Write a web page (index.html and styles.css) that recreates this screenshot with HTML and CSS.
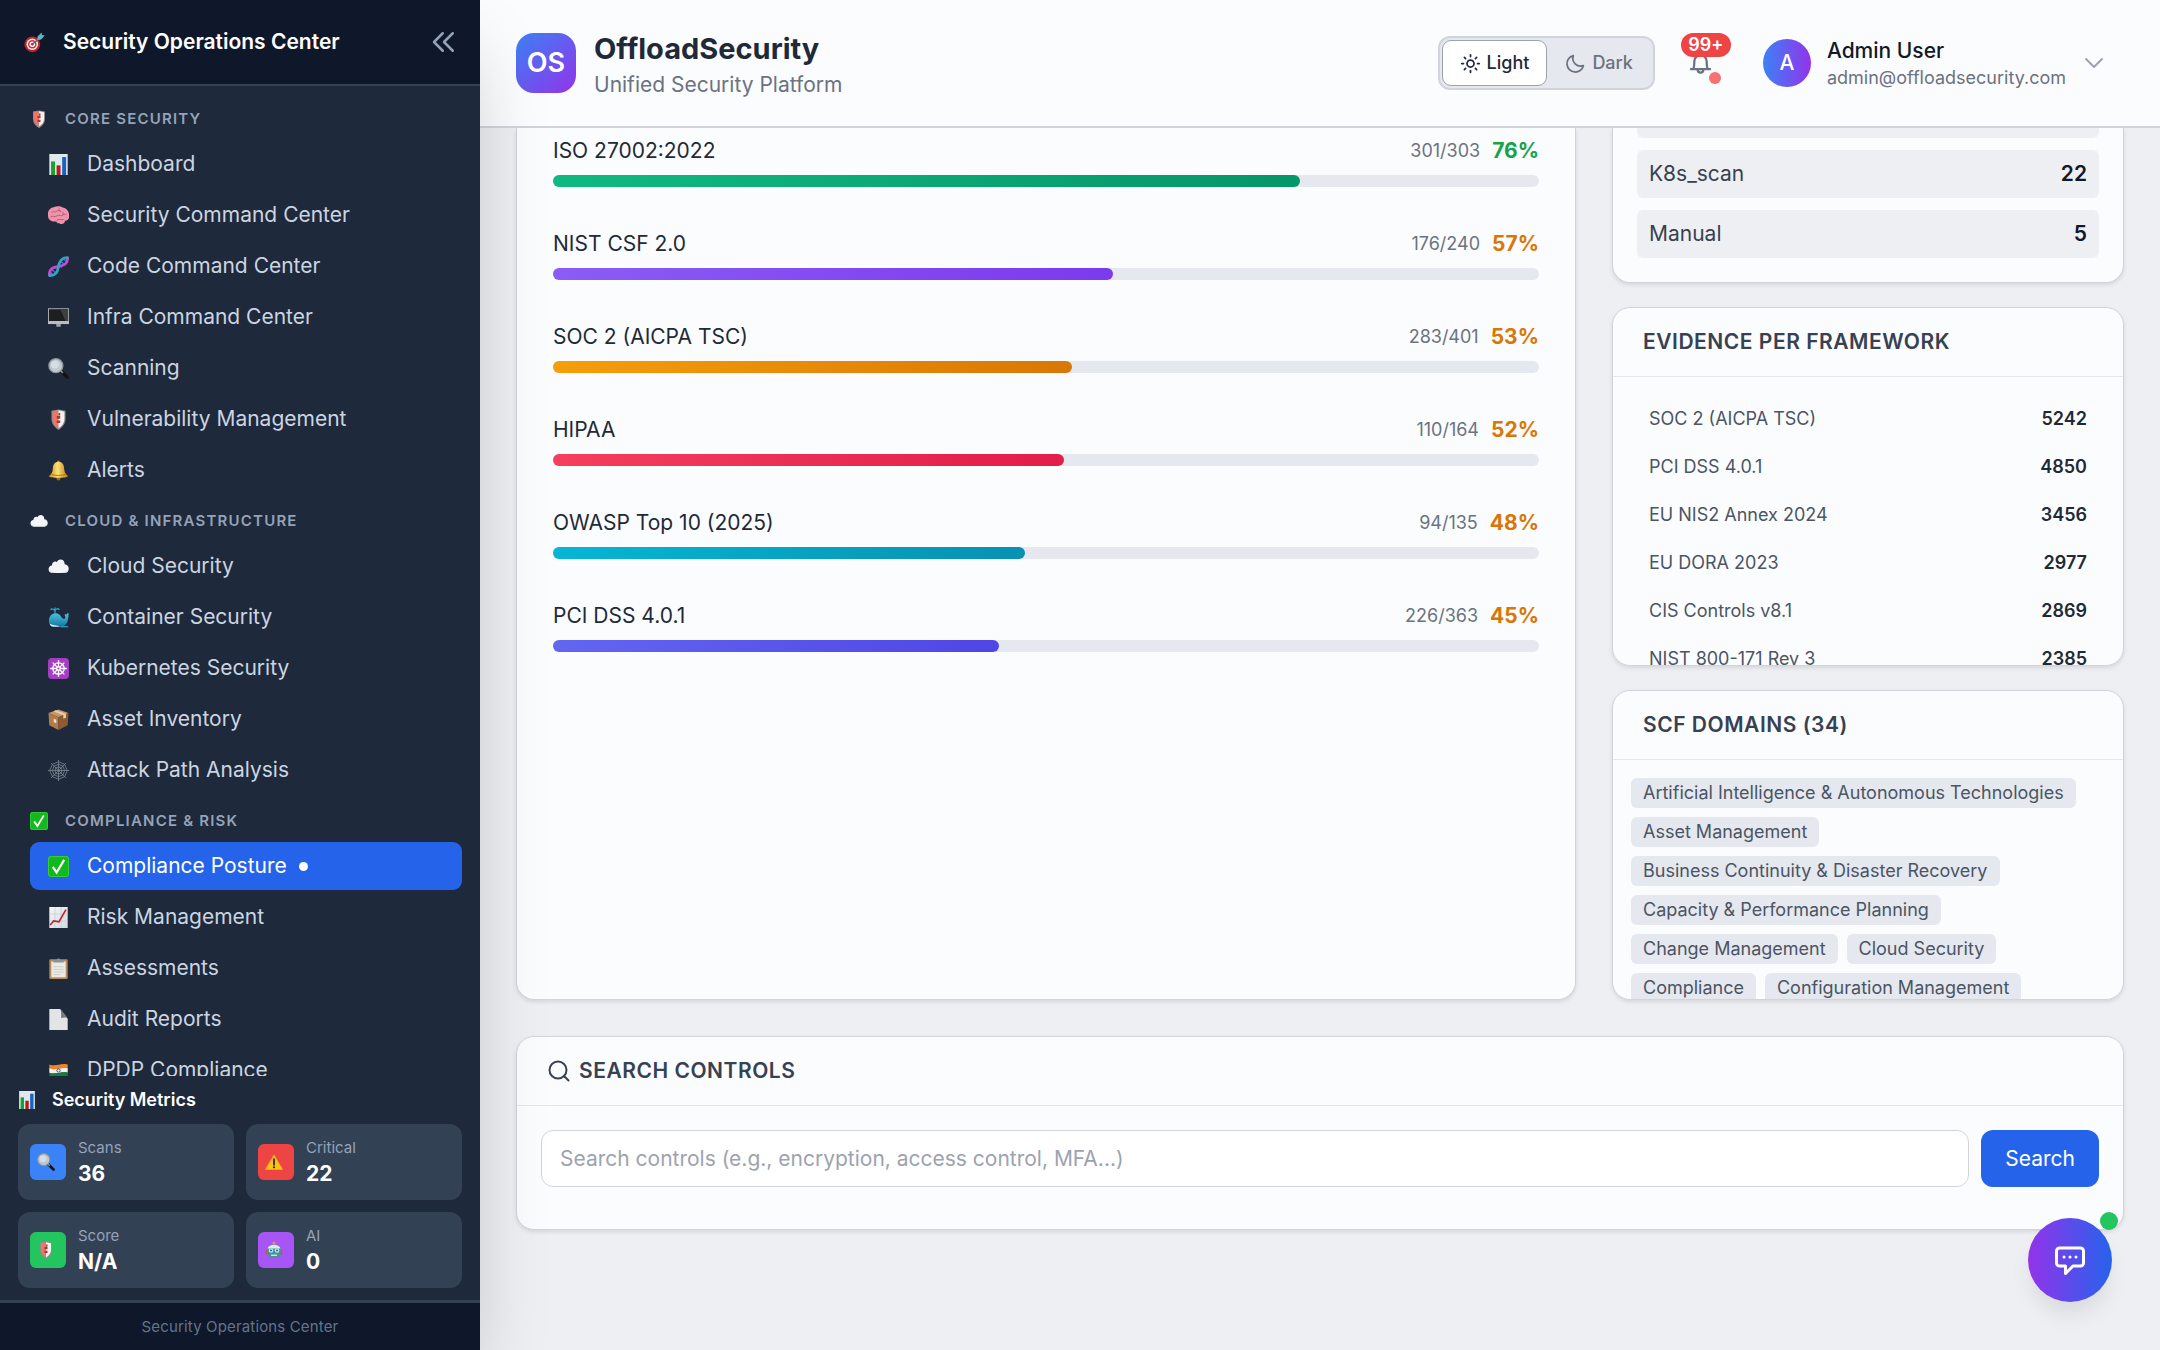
FILE: index.html
```
<!DOCTYPE html>
<html lang="en">
<head>
    <meta charset="UTF-8">
    <title>OffloadSecurity - Compliance Posture</title>
    <link rel="stylesheet" href="styles.css">
</head>
<body>
    <!-- icon sprite -->
    <svg class="sprite" aria-hidden="true">
        <defs>
            <linearGradient id="gold" x1="0" x2="1"><stop offset="0" stop-color="#c98a12"/><stop offset=".45" stop-color="#ffe074"/><stop offset="1" stop-color="#b9780c"/></linearGradient>
            <linearGradient id="whaleBlue" x1="0" y1="0" x2="0" y2="1"><stop offset="0" stop-color="#4cc3de"/><stop offset="1" stop-color="#1577a5"/></linearGradient>
            <linearGradient id="paper" x1="0" y1="0" x2="1" y2="1"><stop offset="0" stop-color="#f4f6f8"/><stop offset="1" stop-color="#d3d8de"/></linearGradient>
        </defs>
        <symbol id="i-target" viewBox="0 0 24 24">
            <circle cx="9.500" cy="14" r="9" fill="#c4222b"/><circle cx="9.500" cy="14" r="6.600" fill="#f5f5f5"/><circle cx="9.500" cy="14" r="4.900" fill="#d92b34"/><circle cx="9.500" cy="14" r="3.200" fill="#fff"/><circle cx="9.500" cy="14" r="1.600" fill="#d92b34"/>
            <path d="M9.500 14 18 7" stroke="#3a6f80" stroke-width="1.600"/><path d="m15 9.500.5-4.500 4.500-4.500.6 3 3.200.6-4.300 4.400z" fill="#58b7c6"/>
        </symbol>
        <symbol id="i-shield" viewBox="0 0 24 24">
            <path d="M4 2 12 .5 20 2v9.500c0 5.500-3.500 9.500-8 12.500-4.500-3-8-7-8-12.500z" fill="#8d8f92"/>
            <path d="M5.300 3 12 1.500v20.500C8 19.500 5.300 16 5.300 11.500z" fill="#ef7466"/><path d="M18.700 3 12 1.500v20.500c4-2.500 6.700-6 6.700-10.500z" fill="#f3f3f1"/>
            <path d="M12 4.500h2v3h-2zM10 8h2v3h-2zM12 8h2v3h-2zM12 13h2v3h-2zM10 13h2v3h-2z" fill="#a43a35"/>
        </symbol>
        <symbol id="i-chart" viewBox="0 0 24 24">
            <path d="M1.500 0h21v24h-21z" fill="#dfe8ef"/><path d="M3.500 8.500h4.500V24H3.500z" fill="#15a52b"/><path d="M9.800 13h4.500v11H9.800z" fill="#b51a1d"/><path d="M16.200 3.500h4.500V24h-4.500z" fill="#1b62bd"/>
        </symbol>
        <symbol id="i-brain" viewBox="0 0 24 24">
            <path d="M0 12c-1-4.500 2-9 6.500-9.500C9.500 1 14 .8 16.800 2.800 21.500 3.500 24.500 8 24 11.500c1 3.500-1 6.500-4.500 6.500-.5 3.500-4 5-6.500 2.800-2 .3-3-.8-3.500-2C4.500 19.500 0 17.500 0 12z" fill="#ef93ab"/>
            <path d="M4 9c2-3 4 0 6-2s4 1 5-1M3 13.500c3-2 4 1 7-1s5 1 7-1 3 0 4-1M10 17.500c2-2 5 0 8-1M13 4c-1 2 0 3 1.500 3.500M17 8c1 2 0 3-1 3" fill="none" stroke="#b95a7a" stroke-width="1.100"/>
        </symbol>
        <symbol id="i-dna" viewBox="0 0 24 24">
            <path d="M11 8.500 16 13M13.500 5 19 10M17 3l5 4M4 15l5.500 5M2.500 18 6 22" stroke="#6c6bc9" stroke-width="1.400"/>
            <path d="M1.500 23C1 14 6 13 12 12S23 9 22.500 1" fill="none" stroke="#c24bd0" stroke-width="3.200"/>
            <path d="M1 22.500c9 0 10-5 11-10.500S15 1.500 23 2" fill="none" stroke="#2aa7c4" stroke-width="3.200"/>
        </symbol>
        <symbol id="i-monitor" viewBox="0 0 24 24">
            <path d="M0 1.500h24v18H0z" fill="#b9bcc0"/><path d="M1 2.500h22V16H1z" fill="#1d1e20"/><path d="M14 2.500h9V16h-3z" fill="#3d3f42"/><path d="M9.500 19.500h5V22.500h-5z" fill="#a5a8ac"/>
        </symbol>
        <symbol id="i-search" viewBox="0 0 24 24">
            <path d="m15 15 7 7" stroke="#111" stroke-width="3.600" stroke-linecap="round"/><path d="m14 14 3 3" stroke="#8f9499" stroke-width="2"/>
            <circle cx="9" cy="8.800" r="8" fill="#bfc9d3" stroke="#8e959c" stroke-width="1.500"/><circle cx="8" cy="7.500" r="4.500" fill="#d6dde4"/>
        </symbol>
        <symbol id="i-bell" viewBox="0 0 24 24">
            <circle cx="12" cy="2.300" r="1.800" fill="#b9780c"/><circle cx="12" cy="21" r="2.300" fill="#a86a08"/>
            <path d="M12 2c4.500 0 6.300 3.500 6.500 8 .2 4 1.500 6 4.500 8.500-1 2.300-21 2.300-22 0C4 16 5.300 14 5.500 10 5.700 5.500 7.500 2 12 2z" fill="url(#gold)"/><path d="M4 16.500c4 1.600 12 1.600 16 0" fill="none" stroke="#a86a08"/>
        </symbol>
        <symbol id="i-cloud" viewBox="0 0 24 24">
            <path d="M5.500 19.500C-1 19.500-.5 11 4.500 10.800 4.500 7 8 5.500 10 7c2-5 9.500-3.500 9 2.500 6 0 6.500 10 0 10z" fill="#f3f5f8"/><path d="M1.500 16c1 4.500 20 4.500 21 0-.5 2.500-2 3.500-4 3.500h-13c-2 0-3.500-1-4-3.500z" fill="#c5ccd6"/>
        </symbol>
        <symbol id="i-whale" viewBox="0 0 24 24">
            <path d="M8 7V4.500C7 2 4 1.500 3 3.500M8 4.500C8.500 2 11.500 1 13 3.200M8 3V.5" fill="none" stroke="#2a9fbd" stroke-width="1.500"/>
            <path d="M1 16C1 9.500 5 7 9 7c6 0 6 7 10 6.500 1-.4 1-2 .3-3.500-1-2 1-2 2-1.500C22 7 23.500 6 23.500 8c0 6-1.500 14-7.500 14H6c-3 0-5-2-5-6z" fill="url(#whaleBlue)"/>
            <path d="M2 19c4 2 8 1.500 12 3.500H6c-2 0-3.500-1.500-4-3.500z" fill="#d8eef4"/><path d="M14 22.500h9" stroke="#2a9fbd" stroke-width="1.500"/>
        </symbol>
        <symbol id="i-helm" viewBox="0 0 24 24">
            <rect width="24" height="24" rx="4.500" fill="#a43fc4"/>
            <g fill="none" stroke="#fff" stroke-width="1.500"><circle cx="12" cy="12" r="6.500"/><circle cx="12" cy="12" r="2"/><path d="M12 2.500v7.500M12 14v7.500M2.500 12H10M14 12h7.500M5.300 5.300l5.300 5.300M13.400 13.400l5.300 5.300M18.700 5.300l-5.300 5.300M10.600 13.400l-5.300 5.300"/></g>
        </symbol>
        <symbol id="i-box" viewBox="0 0 24 24">
            <path d="m12 .5 11.500 4L12 9.500.5 4.500z" fill="#c99766"/><path d="M.5 4.500 12 9.500V24L1.500 18.500z" fill="#b27b47"/><path d="M23.500 4.500 12 9.500V24l10.500-5.500z" fill="#8d5b30"/><path d="m6 2.500 11.500 4.700v4l3-1.300V5.500L9 1.500z" fill="#e6cfae"/><path d="m6.500 11 3 1.300v4l-3-1.300z" fill="#e8e0d4"/>
        </symbol>
        <symbol id="i-web" viewBox="0 0 24 24">
            <g fill="none" stroke="#7d8794" stroke-width=".9"><path d="M12 0v24M0 12h24M3.500 3.500l17 17M20.500 3.500l-17 17"/><path d="M12 2 19 5l3 7-3 7-7 3-7-3-3-7 3-7zM12 5l5 2 2 5-2 5-5 2-5-2-2-5 2-5zM12 8l3 1 1 3-1 3-3 1-3-1-1-3 1-3z"/></g>
        </symbol>
        <symbol id="i-check" viewBox="0 0 24 24">
            <rect width="24" height="24" rx="3.500" fill="#12b81c"/><rect x=".5" y=".5" width="23" height="23" rx="3.200" fill="none" stroke="#3fd046"/><path d="m5.500 12.500 4.300 6.300L18.500 4.500" fill="none" stroke="#fff" stroke-width="2.500"/>
        </symbol>
        <symbol id="i-trend" viewBox="0 0 24 24">
            <path d="M1.500 0h21v24h-21z" fill="url(#paper)"/><path d="M8 0v24M15 0v24M1.500 8h21M1.500 16h21" stroke="#bcc9d4" stroke-width=".7"/><path d="m2.500 20.500 4-4.500 6 1L20.500 3" fill="none" stroke="#c5232a" stroke-width="1.900"/>
        </symbol>
        <symbol id="i-clipboard" viewBox="0 0 24 24">
            <rect x="1.500" y="1.500" width="21" height="22.500" rx="1.500" fill="#b68b57"/><path d="M3.800 4h16.400v18H3.800z" fill="#eceae6"/><path d="M6 10h12M6 13h12M6 16h12M6 19h8" stroke="#c8c8c8"/><path d="M6 2.500h3.500C10 0 14 0 14.500 2.500H18V5H6z" fill="#8c9197"/>
        </symbol>
        <symbol id="i-page" viewBox="0 0 24 24">
            <path d="M1.500 0H14l8.500 11v13h-21z" fill="#e3e4e5"/><path d="M14 0l8.500 11c-2-2-5-1.500-7.500-.5 0-3 .5-7-1-10.500z" fill="#77797b"/>
        </symbol>
        <symbol id="i-flag" viewBox="0 0 24 24">
            <path d="M1.500 5c7 3 13-2 21 0v5c-8-2-14 3-21 0z" fill="#f58220"/><path d="M1.500 9.500c7 3 13-2 21 0v5c-8-2-14 3-21 0z" fill="#f2f2f2"/><path d="M1.500 14.500c7 3 13-2 21 0v5c-8-2-14 3-21 0z" fill="#13803a"/><circle cx="12" cy="12" r="1.900" fill="none" stroke="#2d3d94"/>
        </symbol>
        <symbol id="i-warning" viewBox="0 0 24 24">
            <path d="M12 2.500 23.500 22H.5z" fill="#fbc314" stroke="#f0ad0a" stroke-linejoin="round"/><path d="M12 8v7.500" stroke="#222" stroke-width="2.300" stroke-linecap="round"/><circle cx="12" cy="19" r="1.400" fill="#222"/>
        </symbol>
        <symbol id="i-robot" viewBox="0 0 24 24">
            <circle cx="12" cy="2.500" r="2" fill="#e8943a"/><path d="M1 12h3v6H1zM20 12h3v6h-3z" fill="#c4534c"/><path d="M3 12c0-10 18-10 18 0v6c0 6-18 6-18 0z" fill="#4d8f9b"/><path d="M3.500 10C5 3.500 19 3.500 20.500 10z" fill="#e1e9ec"/>
            <circle cx="8" cy="12.500" r="3" fill="#9ff0f5"/><circle cx="16" cy="12.500" r="3" fill="#9ff0f5"/><circle cx="8" cy="12.500" r="1.200" fill="#2b5c68"/><circle cx="16" cy="12.500" r="1.200" fill="#2b5c68"/><path d="M8 19h8" stroke="#d9e5e8" stroke-width="1.800"/>
        </symbol>
    </svg>

    <aside class="sidebar">
        <div class="sidebar-header">
            <svg class="emoji"><use href="#i-target"/></svg>
            <span class="sidebar-title">Security Operations Center</span>
            <button class="collapse-btn" type="button" aria-label="Collapse sidebar">
                <svg viewBox="0 0 24 24" width="30" height="30"><path d="m11 19-7-7 7-7m8 14-7-7 7-7"/></svg>
            </button>
        </div>

        <nav class="sidebar-nav">
            <h2 class="nav-label"><svg class="emoji-sm"><use href="#i-shield"/></svg>CORE SECURITY</h2>
            <a class="nav-item" href="#"><svg class="emoji"><use href="#i-chart"/></svg>Dashboard</a>
            <a class="nav-item" href="#"><svg class="emoji"><use href="#i-brain"/></svg>Security Command Center</a>
            <a class="nav-item" href="#"><svg class="emoji"><use href="#i-dna"/></svg>Code Command Center</a>
            <a class="nav-item" href="#"><svg class="emoji"><use href="#i-monitor"/></svg>Infra Command Center</a>
            <a class="nav-item" href="#"><svg class="emoji"><use href="#i-search"/></svg>Scanning</a>
            <a class="nav-item" href="#"><svg class="emoji"><use href="#i-shield"/></svg>Vulnerability Management</a>
            <a class="nav-item" href="#"><svg class="emoji"><use href="#i-bell"/></svg>Alerts</a>

            <h2 class="nav-label"><svg class="emoji-sm"><use href="#i-cloud"/></svg>CLOUD &amp; INFRASTRUCTURE</h2>
            <a class="nav-item" href="#"><svg class="emoji"><use href="#i-cloud"/></svg>Cloud Security</a>
            <a class="nav-item" href="#"><svg class="emoji"><use href="#i-whale"/></svg>Container Security</a>
            <a class="nav-item" href="#"><svg class="emoji"><use href="#i-helm"/></svg>Kubernetes Security</a>
            <a class="nav-item" href="#"><svg class="emoji"><use href="#i-box"/></svg>Asset Inventory</a>
            <a class="nav-item" href="#"><svg class="emoji"><use href="#i-web"/></svg>Attack Path Analysis</a>

            <h2 class="nav-label"><svg class="emoji-sm"><use href="#i-check"/></svg>COMPLIANCE &amp; RISK</h2>
            <a class="nav-item active" href="#"><svg class="emoji"><use href="#i-check"/></svg>Compliance Posture<span class="active-dot"></span></a>
            <a class="nav-item" href="#"><svg class="emoji"><use href="#i-trend"/></svg>Risk Management</a>
            <a class="nav-item" href="#"><svg class="emoji"><use href="#i-clipboard"/></svg>Assessments</a>
            <a class="nav-item" href="#"><svg class="emoji"><use href="#i-page"/></svg>Audit Reports</a>
            <a class="nav-item" href="#"><svg class="emoji"><use href="#i-flag"/></svg>DPDP Compliance</a>
        </nav>

        <div class="metrics">
            <h3 class="metrics-title"><svg class="emoji-sm"><use href="#i-chart"/></svg>Security Metrics</h3>
            <div class="metrics-grid">
                <div class="metric">
                    <div class="metric-icon blue"><svg class="emoji-sm"><use href="#i-search"/></svg></div>
                    <div><p class="metric-label">Scans</p><p class="metric-value">36</p></div>
                </div>
                <div class="metric">
                    <div class="metric-icon red"><svg class="emoji-sm"><use href="#i-warning"/></svg></div>
                    <div><p class="metric-label">Critical</p><p class="metric-value">22</p></div>
                </div>
                <div class="metric">
                    <div class="metric-icon green"><svg class="emoji-sm"><use href="#i-shield"/></svg></div>
                    <div><p class="metric-label">Score</p><p class="metric-value">N/A</p></div>
                </div>
                <div class="metric">
                    <div class="metric-icon purple"><svg class="emoji-sm"><use href="#i-robot"/></svg></div>
                    <div><p class="metric-label">AI</p><p class="metric-value">0</p></div>
                </div>
            </div>
        </div>
        <div class="sidebar-footer">Security Operations Center</div>
    </aside>

    <div class="page">
        <header class="topbar">
            <div class="logo">OS</div>
            <div class="brand">
                <h1>OffloadSecurity</h1>
                <p>Unified Security Platform</p>
            </div>
            <div class="theme-toggle">
                <button class="theme-btn selected" type="button">
                    <svg viewBox="0 0 24 24" width="21" height="21"><circle cx="12" cy="12" r="4"/><path d="M12 2v2M12 20v2M2 12h2M20 12h2M5 5l1.400 1.400M17.600 17.600 19 19M19 5l-1.400 1.400M6.400 17.600 5 19"/></svg>
                    Light
                </button>
                <button class="theme-btn" type="button">
                    <svg viewBox="0 0 24 24" width="21" height="21"><path d="M21 14.500A9 9 0 0 1 9.500 3 9.500 9.500 0 1 0 21 14.500z"/></svg>
                    Dark
                </button>
            </div>
            <button class="bell-btn" type="button" aria-label="Notifications">
                <svg viewBox="0 0 24 24" width="27" height="27"><path d="M3.500 17h17M5.500 17c1-2 1-3.500 1-7a5.500 5.500 0 0 1 11 0c0 3.500 0 5 1 7M9.500 17.500a2.500 2.500 0 0 0 5 0"/></svg>
                <span class="bell-count">99+</span>
                <span class="bell-dot"></span>
            </button>
            <button class="user" type="button">
                <span class="avatar">A</span>
                <span class="user-text">
                    <span class="user-name">Admin User</span>
                    <span class="user-email">admin@offloadsecurity.com</span>
                </span>
                <svg viewBox="0 0 24 24" width="24" height="24"><path d="m4 8 8 8 8-8"/></svg>
            </button>
        </header>

        <main class="content">
            <div class="columns">
                <section class="card scrolled frameworks">
                    <div class="framework">
                        <div class="framework-row"><span class="framework-name">ISO 27002:2022</span><span class="framework-count">301/303</span><span class="framework-pct good">76%</span></div>
                        <div class="track"><div class="fill emerald" style="width: 75.8%"></div></div>
                    </div>
                    <div class="framework">
                        <div class="framework-row"><span class="framework-name">NIST CSF 2.0</span><span class="framework-count">176/240</span><span class="framework-pct">57%</span></div>
                        <div class="track"><div class="fill violet" style="width: 56.8%"></div></div>
                    </div>
                    <div class="framework">
                        <div class="framework-row"><span class="framework-name">SOC 2 (AICPA TSC)</span><span class="framework-count">283/401</span><span class="framework-pct">53%</span></div>
                        <div class="track"><div class="fill amber" style="width: 52.6%"></div></div>
                    </div>
                    <div class="framework">
                        <div class="framework-row"><span class="framework-name">HIPAA</span><span class="framework-count">110/164</span><span class="framework-pct">52%</span></div>
                        <div class="track"><div class="fill rose" style="width: 51.8%"></div></div>
                    </div>
                    <div class="framework">
                        <div class="framework-row"><span class="framework-name">OWASP Top 10 (2025)</span><span class="framework-count">94/135</span><span class="framework-pct">48%</span></div>
                        <div class="track"><div class="fill cyan" style="width: 47.9%"></div></div>
                    </div>
                    <div class="framework">
                        <div class="framework-row"><span class="framework-name">PCI DSS 4.0.1</span><span class="framework-count">226/363</span><span class="framework-pct">45%</span></div>
                        <div class="track"><div class="fill indigo" style="width: 45.2%"></div></div>
                    </div>
                </section>

                <div class="side">
                    <section class="card scrolled">
                        <ul class="sources">
                            <li class="source-cut"></li>
                            <li><span>K8s_scan</span><b>22</b></li>
                            <li><span>Manual</span><b>5</b></li>
                        </ul>
                    </section>

                    <section class="card">
                        <h2 class="card-title">EVIDENCE PER FRAMEWORK</h2>
                        <div class="evidence">
                            <table>
                                <tr><th scope="row">SOC 2 (AICPA TSC)</th><td>5242</td></tr>
                                <tr><th scope="row">PCI DSS 4.0.1</th><td>4850</td></tr>
                                <tr><th scope="row">EU NIS2 Annex 2024</th><td>3456</td></tr>
                                <tr><th scope="row">EU DORA 2023</th><td>2977</td></tr>
                                <tr><th scope="row">CIS Controls v8.1</th><td>2869</td></tr>
                                <tr><th scope="row">NIST 800-171 Rev 3</th><td>2385</td></tr>
                            </table>
                        </div>
                    </section>

                    <section class="card">
                        <h2 class="card-title">SCF DOMAINS (34)</h2>
                        <div class="domains">
                            <span class="chip">Artificial Intelligence &amp; Autonomous Technologies</span>
                            <span class="chip">Asset Management</span>
                            <span class="chip">Business Continuity &amp; Disaster Recovery</span>
                            <span class="chip">Capacity &amp; Performance Planning</span>
                            <span class="chip">Change Management</span>
                            <span class="chip">Cloud Security</span>
                            <span class="chip">Compliance</span>
                            <span class="chip">Configuration Management</span>
                        </div>
                    </section>
                </div>
            </div>

            <section class="card">
                <h2 class="card-title">
                    <svg viewBox="0 0 24 24" width="24" height="24"><circle cx="11" cy="11" r="8.500"/><path d="m17.500 17.500 4 4"/></svg>
                    SEARCH CONTROLS
                </h2>
                <form class="search-form">
                    <input class="search-input" type="text" aria-label="Search controls" placeholder="Search controls (e.g., encryption, access control, MFA...)">
                    <button class="search-btn" type="button">Search</button>
                </form>
            </section>
        </main>
    </div>

    <button class="chat-btn" type="button" aria-label="Open chat">
        <svg viewBox="0 0 24 24" width="36" height="36"><path d="M8 10h.01M12 10h.01M16 10h.01M9 16H5a2 2 0 0 1-2-2V6a2 2 0 0 1 2-2h14a2 2 0 0 1 2 2v8a2 2 0 0 1-2 2h-5l-5 5v-5z"/></svg>
        <span class="chat-dot"></span>
    </button>
</body>
</html>
```
FILE: styles.css
```
* {
    box-sizing: border-box;
    margin: 0;
    padding: 0;
}
body {
    display: flex;
    height: 100vh;
    overflow: hidden;
    font-family: Inter, "Liberation Sans", sans-serif;
    font-size: 21px;
    line-height: 30px;
    color: #1f2937;
    background-color: #eeeff3;
}
button, input {
    font: inherit;
    border: none;
    background: none;
}
button {
    cursor: pointer;
}
a {
    text-decoration: none;
}
.sprite {
    position: absolute;
    width: 0;
    height: 0;
}
.emoji {
    width: 21px;
    height: 21px;
    flex-shrink: 0;
}
.emoji-sm {
    width: 18px;
    height: 18px;
    flex-shrink: 0;
}

/* Sidebar */
.sidebar {
    position: relative;
    z-index: 20;
    display: flex;
    flex-direction: column;
    width: 480px;
    flex-shrink: 0;
    background-color: #1e293b;
    box-shadow: 0 38px 75px -18px rgba(0,0,0,0.25);
}
.sidebar-header {
    display: flex;
    align-items: center;
    height: 86px;
    padding: 0 21px 0 24px;
    flex-shrink: 0;
    background-color: #0f172a;
    border-bottom: 2px solid #334155;
}
.sidebar-title {
    margin-left: 18px;
    font-weight: 600;
    color: #fff;
}
.collapse-btn {
    display: flex;
    margin-left: auto;
}
.collapse-btn svg {
    fill: none;
    stroke: #94a3b8;
    stroke-width: 2;
    stroke-linecap: round;
    stroke-linejoin: round;
}
.sidebar-nav {
    flex: 1;
    min-height: 0;
    padding: 6px 18px 0 30px;
    overflow: hidden;
}
.nav-label {
    display: flex;
    align-items: center;
    gap: 17px;
    height: 48px;
    padding-top: 6px;
    font-size: 15px;
    font-weight: 600;
    letter-spacing: 0.08em;
    color: #94a3b8;
}
.nav-item {
    display: flex;
    align-items: center;
    gap: 18px;
    height: 48px;
    margin-bottom: 3px;
    padding: 0 18px;
    border-radius: 9px;
    color: #cbd5e1;
}
.nav-item:has(+ .nav-label) {
    margin-bottom: 0;
}
.nav-item.active {
    background-color: #2563eb;
    color: #fff;
}
.active-dot {
    width: 9px;
    height: 9px;
    margin-left: -6px;
    border-radius: 50%;
    background-color: #fff;
}
.metrics {
    padding: 9px 18px 12px;
}
.metrics-title {
    display: flex;
    align-items: center;
    gap: 16px;
    margin-bottom: 9px;
    font-size: 18px;
    font-weight: 600;
    color: #fff;
}
.metrics-grid {
    display: grid;
    grid-template-columns: 1fr 1fr;
    gap: 12px;
}
.metric {
    display: flex;
    align-items: center;
    gap: 12px;
    height: 76px;
    padding: 0 12px;
    border-radius: 12px;
    background-color: #334155;
}
.metric-icon {
    display: flex;
    align-items: center;
    justify-content: center;
    width: 36px;
    height: 36px;
    padding-right: 4px;
    border-radius: 6px;
}
.metric-icon.blue { background-color: #3b82f6; }
.metric-icon.red { background-color: #ef4444; }
.metric-icon.green { background-color: #22c55e; }
.metric-icon.purple { background-color: #a855f7; }
.metric-label {
    font-size: 15px;
    line-height: 24px;
    color: #94a3b8;
}
.metric-value {
    line-height: 28px;
    font-weight: 700;
    color: #fff;
}
.sidebar-footer {
    height: 50px;
    padding-top: 9px;
    flex-shrink: 0;
    border-top: 3px solid #334155;
    background-color: #0f172a;
    font-size: 15px;
    letter-spacing: 0.01em;
    text-align: center;
    color: #64748b;
}

/* Top bar */
.page {
    display: flex;
    flex-direction: column;
    flex: 1;
    min-width: 0;
}
.topbar {
    position: relative;
    z-index: 10;
    display: flex;
    align-items: center;
    height: 128px;
    padding: 0 54px 0 36px;
    flex-shrink: 0;
    background-color: #fbfcfe;
    border-bottom: 2px solid #d1d5db;
}
.logo {
    width: 60px;
    height: 60px;
    border-radius: 18px;
    background: linear-gradient(135deg, #3b82f6, #9333ea);
    font-size: 27px;
    font-weight: 600;
    line-height: 60px;
    text-align: center;
    color: #fff;
}
.brand {
    margin: 0 auto 0 18px;
    padding-top: 2px;
}
.brand h1 {
    font-size: 29px;
    line-height: 42px;
}
.brand p {
    color: #6b7280;
}
.theme-toggle {
    display: flex;
    height: 54px;
    padding: 2px;
    border: 2px solid #d1d5db;
    border-radius: 12px;
    background-color: #e5e8ef;
}
.theme-btn {
    display: flex;
    align-items: center;
    gap: 6px;
    padding: 0 17px;
    border: 1px solid transparent;
    border-radius: 9px;
    font-size: 18px;
    font-weight: 500;
    color: #6b7280;
}
.theme-btn.selected {
    border-color: #9ca3af;
    background-color: #fff;
    color: #1f2937;
}
.theme-btn svg, .bell-btn svg, .user svg, .card-title svg, .chat-btn svg {
    fill: none;
    stroke: currentColor;
    stroke-width: 2;
    stroke-linecap: round;
    stroke-linejoin: round;
}
.bell-btn {
    position: relative;
    width: 51px;
    height: 51px;
    margin: 0 37px 0 20px;
    color: #6b7280;
}
.bell-btn svg {
    display: block;
    margin: 12px;
}
.bell-count {
    position: absolute;
    top: -5px;
    left: 6px;
    width: 50px;
    border-radius: 12px;
    background-color: #ef4444;
    font-size: 18px;
    font-weight: 600;
    line-height: 24px;
    color: #fff;
}
.bell-dot {
    position: absolute;
    right: 5px;
    bottom: 5px;
    width: 12px;
    height: 12px;
    border-radius: 50%;
    background-color: #f87171;
}
.user {
    display: flex;
    align-items: center;
    gap: 16px;
    text-align: left;
    color: #9ca3af;
}
.avatar {
    width: 48px;
    height: 48px;
    border-radius: 50%;
    background: linear-gradient(90deg, #3b82f6, #9333ea);
    font-weight: 500;
    line-height: 48px;
    text-align: center;
    color: #fff;
}
.user-text {
    display: flex;
    flex-direction: column;
    padding-top: 2px;
}
.user-name {
    line-height: 28px;
    font-weight: 500;
    color: #111827;
}
.user-email {
    font-size: 18px;
    line-height: 26px;
    color: #6b7280;
}

/* Content */
.content {
    flex: 1;
    padding: 0 36px;
}
.columns {
    display: grid;
    grid-template-columns: repeat(3, 1fr);
    gap: 36px;
    margin-bottom: 36px;
}
.card {
    overflow: hidden;
    border: 1px solid #d1d5db;
    border-radius: 18px;
    background-color: #fbfcfe;
    box-shadow: 0 2px 4px rgba(0,0,0,0.1);
}
.card.scrolled {
    border-top: none;
    border-radius: 0 0 18px 18px;
}
.card-title {
    display: flex;
    align-items: center;
    gap: 8px;
    height: 69px;
    padding: 0 30px;
    border-bottom: 1px solid #e5e7eb;
    font-size: 21px;
    font-weight: 600;
    letter-spacing: 0.025em;
    color: #374151;
}
.side {
    display: flex;
    flex-direction: column;
    gap: 24px;
    min-width: 0;
}
.frameworks {
    grid-column: span 2;
    padding: 8px 36px 0;
}
.framework {
    margin-bottom: 42px;
}
.framework-row {
    display: flex;
    margin-bottom: 9px;
}
.framework-name {
    margin-right: auto;
}
.framework-count {
    margin-right: 12px;
    font-size: 18px;
    color: #6b7280;
}
.framework-pct {
    font-weight: 700;
    color: #d97706;
}
.framework-pct.good {
    color: #16a34a;
}
.track {
    height: 12px;
    border-radius: 6px;
    background-color: #e5e8ef;
}
.fill {
    height: 12px;
    border-radius: 6px;
}
.fill.emerald { background: linear-gradient(90deg, #10b981, #059669); }
.fill.violet { background: linear-gradient(90deg, #8b5cf6, #7c3aed); }
.fill.amber { background: linear-gradient(90deg, #f59e0b, #d97706); }
.fill.rose { background: linear-gradient(90deg, #f43f5e, #e11d48); }
.fill.cyan { background: linear-gradient(90deg, #06b6d4, #0891b2); }
.fill.indigo { background: linear-gradient(90deg, #6366f1, #4f46e5); }
.sources {
    padding: 0 24px 24px;
    list-style: none;
}
.sources li {
    display: flex;
    align-items: center;
    justify-content: space-between;
    height: 48px;
    margin-bottom: 12px;
    padding: 0 12px;
    border-radius: 6px;
    background-color: #eeeff3;
    color: #374151;
}
.sources li:last-child {
    margin-bottom: 0;
}
.sources .source-cut {
    height: 10px;
    border-radius: 0 0 6px 6px;
}
.sources b {
    font-weight: 600;
    color: #111827;
}
.evidence {
    max-height: 288px;
    padding: 18px 36px 0;
    overflow: hidden;
}
.evidence table {
    width: 100%;
    border-collapse: collapse;
    font-size: 18px;
}
.evidence tr {
    height: 48px;
}
.evidence th {
    font-weight: 400;
    text-align: left;
    color: #4b5563;
}
.evidence td {
    font-weight: 600;
    text-align: right;
}
.domains {
    display: flex;
    flex-wrap: wrap;
    gap: 9px;
    max-height: 239px;
    padding: 18px 18px 0;
    overflow: hidden;
}
.chip {
    padding: 0 12px;
    border-radius: 6px;
    background-color: #e5e8ef;
    font-size: 18px;
    color: #4b5563;
}
.search-form {
    display: flex;
    gap: 12px;
    padding: 24px 24px 42px;
}
.search-input {
    flex: 1;
    min-width: 0;
    height: 57px;
    padding: 0 18px;
    border: 1px solid #d1d5db;
    border-radius: 12px;
    background-color: #fff;
}
.search-input::placeholder {
    color: #9ca3af;
}
.search-btn {
    padding: 0 24px;
    border-radius: 12px;
    background-color: #2563eb;
    color: #fff;
}

/* Chat launcher */
.chat-btn {
    position: fixed;
    right: 48px;
    bottom: 48px;
    z-index: 30;
    display: flex;
    align-items: center;
    justify-content: center;
    width: 84px;
    height: 84px;
    border-radius: 50%;
    background: linear-gradient(90deg, #9333ea, #2563eb);
    box-shadow: 0 15px 23px -5px rgba(0,0,0,0.1);
    color: #fff;
}
.chat-dot {
    position: absolute;
    top: -6px;
    right: -6px;
    width: 18px;
    height: 18px;
    border-radius: 50%;
    background-color: #22c55e;
}
```
